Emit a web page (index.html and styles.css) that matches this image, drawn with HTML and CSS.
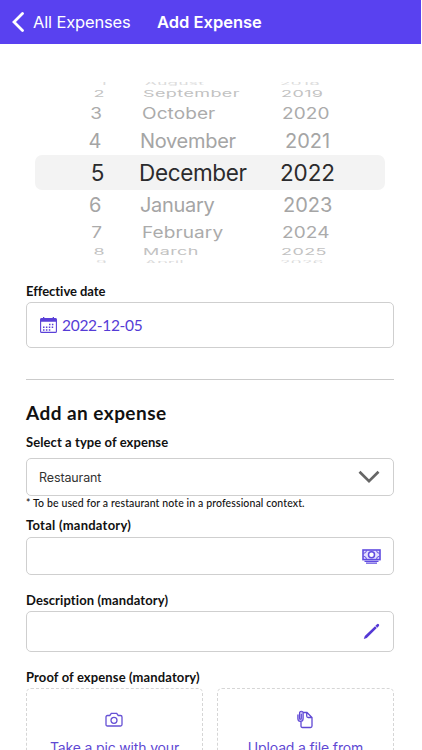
FILE: index.html
```html
<!DOCTYPE html>
<html lang="en">
<head>
<meta charset="utf-8">
<title>Add Expense</title>
<link rel="stylesheet" href="styles.css">
</head>
<body>
<header class="bar">
  <svg class="back" width="14" height="20" viewBox="0 0 14 20"><path d="M11.500 1.500 3 10l8.500 8.500" fill="none" stroke="#fff" stroke-width="2.800" stroke-linecap="round"/></svg>
  <span class="bar-link">All Expenses</span>
  <h1 class="bar-title">Add Expense</h1>
</header>
<main>
  <section class="picker">
    <div class="row edge top"><span class="day">1</span><span class="month">August</span><span class="year">2018</span></div>
    <div class="row far"><span class="day">2</span><span class="month">September</span><span class="year">2019</span></div>
    <div class="row mid"><span class="day">3</span><span class="month">October</span><span class="year">2020</span></div>
    <div class="row near"><span class="day">4</span><span class="month">November</span><span class="year y-2021">2021</span></div>
    <div class="row selected"><span class="day">5</span><span class="month">December</span><span class="year">2022</span></div>
    <div class="row near after"><span class="day">6</span><span class="month">January</span><span class="year">2023</span></div>
    <div class="row mid"><span class="day">7</span><span class="month">February</span><span class="year">2024</span></div>
    <div class="row far"><span class="day">8</span><span class="month">March</span><span class="year">2025</span></div>
    <div class="row edge bottom"><span class="day">9</span><span class="month">April</span><span class="year">2026</span></div>
  </section>
  <section class="form">
    <h3 class="label l-date">Effective date</h3>
    <div class="field date">
      <svg width="17" height="16" viewBox="0 0 17 16"><rect x=".6" y="1.6" width="15.8" height="13.8" rx="1" fill="none" stroke="#5a40d8" stroke-width="1.100"/><path d="M.6 1.500h15.800v3.300H.6zM3 0h1.300v2H3zM12.700 0H14v2h-1.300z" fill="#5a40d8"/><path d="M9 7.500h5.500M3 10.300h11.500M3 13h8.500" stroke="#5a40d8" stroke-width="1.500" stroke-dasharray="1.500 1.400"/></svg>
      <span class="date-text">2022-12-05</span>
    </div>
    <hr class="rule">
    <h2 class="heading">Add an expense</h2>
    <h3 class="label l-type">Select a type of expense</h3>
    <div class="field select"><span class="select-text">Restaurant</span>
      <svg width="22" height="14" viewBox="0 0 22 14"><path d="M1.500 1.800 11 11.200l9.500-9.400" fill="none" stroke="#666" stroke-width="2.700"/></svg>
    </div>
    <p class="note">* To be used for a restaurant note in a professional context.</p>
    <h3 class="label l-total">Total (mandatory)</h3>
    <div class="field total">
      <svg width="19" height="15" viewBox="0 0 19 15"><rect x="1" y="1" width="17" height="9.600" fill="#e4dfff" stroke="#604be0" stroke-width="1.600"/><path d="M1.500 4.300Q4.300 4.300 4.500 1.500M14.500 1.500Q14.700 4.300 17.500 4.300M1.500 7.300Q4.300 7.300 4.500 10.200M14.500 10.200Q14.700 7.300 17.500 7.300" fill="none" stroke="#604be0"/><circle cx="9.500" cy="5.800" r="3" fill="#fff" stroke="#604be0" stroke-width="1.500"/><path d="M2.500 12.300h14M4 14.200h11" stroke="#604be0" stroke-width="1.300"/></svg>
    </div>
    <h3 class="label l-desc">Description (mandatory)</h3>
    <div class="field desc">
      <svg width="17" height="17" viewBox="0 0 17 17"><path d="M.8 16 1.800 13 12 3.200l1.800 1.800L3.800 14.900zM12.400 2.800 14 1.200q1-.7 1.800.1t.1 1.800l-1.600 1.600z" fill="#5438d5"/></svg>
    </div>
    <h3 class="label l-proof">Proof of expense (mandatory)</h3>
    <div class="uploads">
      <div class="upload">
        <svg width="18" height="20" viewBox="0 0 18 20"><path d="M2.500 5.500h2.300L6.300 3.400h5.400l1.500 2.100h2.300q1.500 0 1.500 1.500v7.500q0 1.500-1.500 1.500h-13Q1 16 1 14.500V7q0-1.500 1.500-1.500z" fill="none" stroke="#6651d5" stroke-width="1.300"/><circle cx="9" cy="10.300" r="3" fill="none" stroke="#6651d5" stroke-width="1.300"/></svg>
        <span class="pic-text">Take a pic with your</span>
      </div>
      <div class="upload">
        <svg width="18" height="20" viewBox="0 0 18 20"><path d="M7 2.500h4l5 5V16q0 1.500-1.500 1.500h-8Q5 17.500 5 16v-4M10.700 2.500V6q0 1.500 1.500 1.500H16" fill="none" stroke="#6049d4" stroke-width="1.300"/><path d="M1.800 4.500V8.500q0 3 2.700 3t2.700-3V3.300Q7.200 1.300 5.300 1.300T3.500 3.300v5q0 1 .9 1t.9-1V4" fill="#c0b6f4" stroke="#6049d4" stroke-width="1.100"/></svg>
        <span class="file-text">Upload a file from</span>
      </div>
    </div>
  </section>
</main>
</body>
</html>
```
FILE: styles.css
```css
* { box-sizing: border-box; }
html { overflow: hidden; }
body { margin: 0; width: 422px; height: 750px; overflow: hidden; background: #fff; color: #111; font-family: Lato, sans-serif; }
h1, h2, h3, p { margin: 0; white-space: nowrap; }
svg { display: block; flex: none; }

.bar { display: flex; align-items: center; width: 421px; height: 44px; padding-left: 11px; background: #5941f0; color: #fff; font-family: Inter, sans-serif; }
.bar-link { width: 124px; margin-left: 8px; font-size: 16.5px; letter-spacing: -.15px; white-space: nowrap; }
.bar-title { font-size: 16.5px; font-weight: 600; }

.picker { height: 181px; margin-top: 38px; overflow: hidden; font-family: Inter, sans-serif; }
.row { display: grid; grid-template-columns: 104px 141px 1fr; grid-template-rows: 100%; align-items: center; white-space: nowrap; }
.row span { line-height: 1.2; }
.day { justify-self: end; }
.month { justify-self: start; margin-left: 35px; }
.year { justify-self: start; margin-left: 35px; }
.selected { height: 35px; margin: 0 37px 0 35px; grid-template-columns: 69px 141px 1fr; border-radius: 7px; background: #f3f3f3; color: #2b2b2d; font-size: 22.5px; letter-spacing: -.35px; }
.selected .year { letter-spacing: -.1px; }
.near { height: 28px; color: #a5a5a5; font-size: 20px; letter-spacing: -.3px; }
.after { height: 29px; }
.near .day { margin-right: 3px; }
.near .month { margin-left: 36px; }
.near .year { margin-left: 38px; letter-spacing: 0; }
.near .y-2021 { margin-left: 40px; }
.mid { height: 27px; color: #ababab; font-size: 19px; letter-spacing: .1px; }
.mid span { transform: translateY(1px) scaleY(.82); }
.mid .day { margin-right: 2px; }
.mid .month { margin-left: 38px; }
.mid .year { margin-left: 37px; }
.far { height: 12px; color: #c2c2c2; font-size: 18px; letter-spacing: .4px; }
.far span { transform: scaleY(.52); }
.far .day { margin-right: -1px; }
.far .month { margin-left: 39px; }
.far .year { margin-left: 36px; }
.edge { height: 6px; color: #dcdcdc; font-size: 17px; letter-spacing: .4px; }
.edge .day { margin-right: -3px; }
.edge .month { margin-left: 41px; }
.edge .year { margin-left: 35px; }
.top span { transform: translateY(-2px) scaleY(.27); }
.bottom span { transform: translateY(1px) scaleY(.25); }

.form { display: flex; flex-direction: column; margin: 0 28px 0 26px; }
.label { height: 16px; line-height: 15px; font-size: 13px; font-weight: 700; letter-spacing: .08px; }
.field { display: flex; align-items: center; border: 1px solid #cfcfcf; border-radius: 5px; }
.l-date { margin-top: 20px; line-height: 17px; letter-spacing: -.05px; }
.date { height: 46px; margin-top: 3px; padding-left: 13px; gap: 5px; color: #553cd6; font-size: 15.5px; letter-spacing: -.3px; }
.rule { width: 100%; height: 1px; margin: 31px 0 0; border: 0; background: #cbcbcb; }
.heading { height: 24px; margin-top: 21px; line-height: 24px; font-size: 19px; font-weight: 700; letter-spacing: .45px; }
.l-type { margin-top: 10px; }
.select { height: 38px; margin-top: 7px; padding: 0 13px 0 12px; justify-content: space-between; font-family: Inter, sans-serif; font-size: 12.5px; letter-spacing: -.12px; color: #333; }
.note { height: 14px; line-height: 14px; font-size: 10.5px; font-weight: 500; letter-spacing: .12px; }
.l-total { margin-top: 8px; letter-spacing: .25px; }
.total { height: 38px; margin-top: 3px; padding-right: 12px; justify-content: flex-end; }
.l-desc { margin-top: 17px; line-height: 17px; letter-spacing: .1px; }
.desc { height: 41px; margin-top: 3px; padding-right: 13px; justify-content: flex-end; }
.l-proof { margin-top: 17px; line-height: 16px; letter-spacing: .12px; }
.uploads { display: grid; grid-template-columns: 177px 177px; justify-content: space-between; margin-top: 3px; }
.upload { display: flex; flex-direction: column; align-items: center; height: 90px; padding-top: 21px; border: 1px dashed #d6d6d6; border-radius: 5px; color: #6048d3; font-family: Inter, sans-serif; font-size: 14px; letter-spacing: -.15px; white-space: nowrap; }
.upload svg { margin-right: 2px; }
.upload span { margin-top: 9px; }
```
